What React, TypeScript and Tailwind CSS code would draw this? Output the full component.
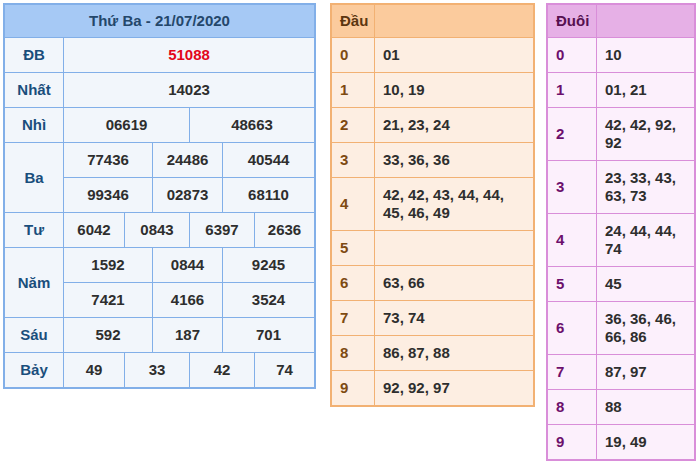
import React from "react";

type Cell = { text: string; span?: number; rows?: number; label?: boolean; red?: boolean };

const results: Cell[][] = [
  [{ text: "ĐB", label: true }, { text: "51088", span: 6, red: true }],
  [{ text: "Nhất", label: true }, { text: "14023", span: 6 }],
  [{ text: "Nhì", label: true }, { text: "06619", span: 3 }, { text: "48663", span: 3 }],
  [{ text: "Ba", label: true, rows: 2 }, { text: "77436", span: 2 }, { text: "24486", span: 2 }, { text: "40544", span: 2 }],
  [{ text: "99346", span: 2 }, { text: "02873", span: 2 }, { text: "68110", span: 2 }],
  [{ text: "Tư", label: true }, { text: "6042" }, { text: "0843", span: 2 }, { text: "6397", span: 2 }, { text: "2636" }],
  [{ text: "Năm", label: true, rows: 2 }, { text: "1592", span: 2 }, { text: "0844", span: 2 }, { text: "9245", span: 2 }],
  [{ text: "7421", span: 2 }, { text: "4166", span: 2 }, { text: "3524", span: 2 }],
  [{ text: "Sáu", label: true }, { text: "592", span: 2 }, { text: "187", span: 2 }, { text: "701", span: 2 }],
  [{ text: "Bảy", label: true }, { text: "49" }, { text: "33", span: 2 }, { text: "42", span: 2 }, { text: "74" }],
];

const spanClass: Record<number, string> = {
  1: "col-span-1",
  2: "col-span-2",
  3: "col-span-3",
  6: "col-span-6",
};

const dau = [
  ["0", "01"],
  ["1", "10, 19"],
  ["2", "21, 23, 24"],
  ["3", "33, 36, 36"],
  ["4", "42, 42, 43, 44, 44, 45, 46, 49"],
  ["5", ""],
  ["6", "63, 66"],
  ["7", "73, 74"],
  ["8", "86, 87, 88"],
  ["9", "92, 92, 97"],
];

const duoi = [
  ["0", "10"],
  ["1", "01, 21"],
  ["2", "42, 42, 92, 92"],
  ["3", "23, 33, 43, 63, 73"],
  ["4", "24, 44, 44, 74"],
  ["5", "45"],
  ["6", "36, 36, 46, 66, 86"],
  ["7", "87, 97"],
  ["8", "88"],
  ["9", "19, 49"],
];

function ResultTable() {
  return (
    <div className="border-2 border-[#82afe8] bg-[#82afe8] w-[313px] shrink-0">
      <div className="grid grid-cols-[58px_60px_27px_36px_32px_31px_59px] auto-rows-[34px] grid-rows-[32px] gap-px">
        <div className="col-span-7 bg-[#a6c9f5] flex items-center justify-center text-[#24476b] text-[15px]">
          Thứ Ba - 21/07/2020
        </div>
        {results.flat().map((c, i) => (
          <div
            key={i}
            className={`bg-[#f2f6fb] flex items-center justify-center ${spanClass[c.span ?? 1]} ${c.rows === 2 ? "row-span-2" : ""} ${
              c.label ? "text-[#1a4e7c]" : c.red ? "text-[#e3061b]" : "text-[#2e2e2e]"
            }`}
          >
            {c.text}
          </div>
        ))}
      </div>
    </div>
  );
}

interface LotoProps {
  title: string;
  rows: string[][];
  border: string;
  head: string;
  body: string;
  titleColor: string;
  keyColor: string;
  width: string;
  cols: string;
}

function LotoTable({ title, rows, border, head, body, titleColor, keyColor, width, cols }: LotoProps) {
  return (
    <div className={`border-2 shrink-0 ${border} ${width}`}>
      <div className={`grid gap-px ${cols}`}>
        <div className={`${head} ${titleColor} px-2 py-[7px]`}>{title}</div>
        <div className={head}></div>
        {rows.map(([k, v]) => (
          <React.Fragment key={k}>
            <div className={`${body} ${keyColor} px-2 py-2 flex items-center`}>{k}</div>
            <div className={`${body} text-[#2e2e2e] px-2 py-2 flex items-center`}>{v}</div>
          </React.Fragment>
        ))}
      </div>
    </div>
  );
}

export default function App() {
  return (
    <div className="bg-white w-[697px] h-[462px] overflow-hidden font-['Liberation_Sans',Arial,sans-serif] font-bold text-[15px] leading-[18px]">
      <div className="flex items-start pt-[3px] pl-[3px]">
        <ResultTable />
        <div className="ml-[14px]">
          <LotoTable
            title="Đầu"
            rows={dau}
            border="border-[#f2b173] bg-[#f2b173]"
            head="bg-[#fbcb9d]"
            body="bg-[#fdeee2]"
            titleColor="text-[#5c3610]"
            keyColor="text-[#7e4a12]"
            width="w-[205px]"
            cols="grid-cols-[42px_158px]"
          />
        </div>
        <div className="ml-[11px]">
          <LotoTable
            title="Đuôi"
            rows={duoi}
            border="border-[#d98ed9] bg-[#d98ed9]"
            head="bg-[#e6b0e6]"
            body="bg-[#fcf0fc]"
            titleColor="text-[#561050]"
            keyColor="text-[#6c0f6c]"
            width="w-[150px]"
            cols="grid-cols-[48px_97px]"
          />
        </div>
      </div>
    </div>
  );
}
